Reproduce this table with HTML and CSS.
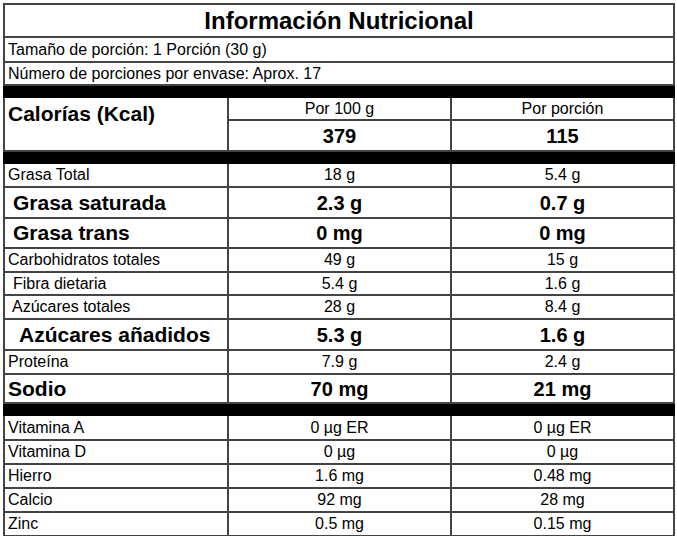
FILE: index.html
```html
<!DOCTYPE html>
<html lang="es">
<head>
<meta charset="utf-8">
<title>Información Nutricional</title>
<link rel="stylesheet" href="styles.css">
</head>
<body>
<div class="wrap">
<table class="nt">
  <colgroup><col class="c1"><col class="c2"><col class="c3"></colgroup>
  <tr class="r-title"><td colspan="3" class="title">Información Nutricional</td></tr>
  <tr class="r25"><td colspan="3" class="lbl">Tamaño de porción: 1 Porción (30 g)</td></tr>
  <tr class="r23"><td colspan="3" class="lbl">Número de porciones por envase: Aprox. 17</td></tr>
  <tr class="bar"><td colspan="3"></td></tr>
  <tr class="r-por"><td rowspan="2" class="cal">Calorías (Kcal)</td><td class="val">Por 100 g</td><td class="val">Por porción</td></tr>
  <tr class="r-kcal"><td class="val big">379</td><td class="val big">115</td></tr>
  <tr class="bar bar14"><td colspan="3"></td></tr>
  <tr class="r24"><td class="lbl">Grasa Total</td><td class="val">18 g</td><td class="val">5.4 g</td></tr>
  <tr class="r31"><td class="lbl big ind1">Grasa saturada</td><td class="val big">2.3 g</td><td class="val big">0.7 g</td></tr>
  <tr class="r30"><td class="lbl big ind1">Grasa trans</td><td class="val big">0 mg</td><td class="val big">0 mg</td></tr>
  <tr class="r24"><td class="lbl">Carbohidratos totales</td><td class="val">49 g</td><td class="val">15 g</td></tr>
  <tr class="r23"><td class="lbl ind2">Fibra dietaria</td><td class="val">5.4 g</td><td class="val">1.6 g</td></tr>
  <tr class="r24"><td class="lbl ind3">Azúcares totales</td><td class="val">28 g</td><td class="val">8.4 g</td></tr>
  <tr class="r31"><td class="lbl big ind4">Azúcares añadidos</td><td class="val big">5.3 g</td><td class="val big">1.6 g</td></tr>
  <tr class="r24"><td class="lbl">Proteína</td><td class="val">7.9 g</td><td class="val">2.4 g</td></tr>
  <tr class="r29"><td class="lbl big">Sodio</td><td class="val big">70 mg</td><td class="val big">21 mg</td></tr>
  <tr class="bar"><td colspan="3"></td></tr>
  <tr class="r25"><td class="lbl">Vitamina A</td><td class="val">0 µg ER</td><td class="val">0 µg ER</td></tr>
  <tr class="r24"><td class="lbl">Vitamina D</td><td class="val">0 µg</td><td class="val">0 µg</td></tr>
  <tr class="r24"><td class="lbl">Hierro</td><td class="val">1.6 mg</td><td class="val">0.48 mg</td></tr>
  <tr class="r24"><td class="lbl">Calcio</td><td class="val">92 mg</td><td class="val">28 mg</td></tr>
  <tr class="r24"><td class="lbl">Zinc</td><td class="val">0.5 mg</td><td class="val">0.15 mg</td></tr>
</table>
</div>
</body>
</html>
```
FILE: styles.css
```css
html, body {
  margin: 0;
  padding: 0;
  background: #fff;
}
.wrap {
  padding: 3px 0 0 3px;
}
.nt {
  width: 670px;
  border-collapse: collapse;
  table-layout: fixed;
  font-family: "Liberation Sans", Arial, sans-serif;
  color: #000;
}
.c1 { width: 224px; }
.c2 { width: 223px; }
.c3 { width: 223px; }
.nt td {
  border: 2px solid #444;
  padding: 0 3px;
  font-size: 16px;
  line-height: 18px;
  vertical-align: middle;
  white-space: nowrap;
}
.title {
  text-align: center;
  font-weight: bold;
  font-size: 24px !important;
  line-height: 26px !important;
}
.lbl { text-align: left; }
.val { text-align: center; }
.big {
  font-weight: bold;
  font-size: 20px !important;
  line-height: 22px !important;
}
.lbl.big { font-size: 21px !important; }
.cal {
  vertical-align: top !important;
  font-weight: bold;
  font-size: 21px !important;
  line-height: 24px !important;
  padding-top: 4px !important;
}
.ind1 { padding-left: 8px !important; }
.ind2 { padding-left: 8px !important; }
.ind3 { padding-left: 7px !important; }
.ind4 { padding-left: 14px !important; }
.r-title { height: 33px; }
.r25 { height: 25px; }
.r23 { height: 23px; }
.r24 { height: 24px; }
.r29 { height: 29px; }
.r30 { height: 30px; }
.r31 { height: 31px; }
.r-por { height: 23px; }
.r-kcal { height: 31px; }
.bar td {
  background: #000;
  border-color: #000;
  height: 10px;
  padding: 0;
}
.bar14 td { height: 10px; }
```
